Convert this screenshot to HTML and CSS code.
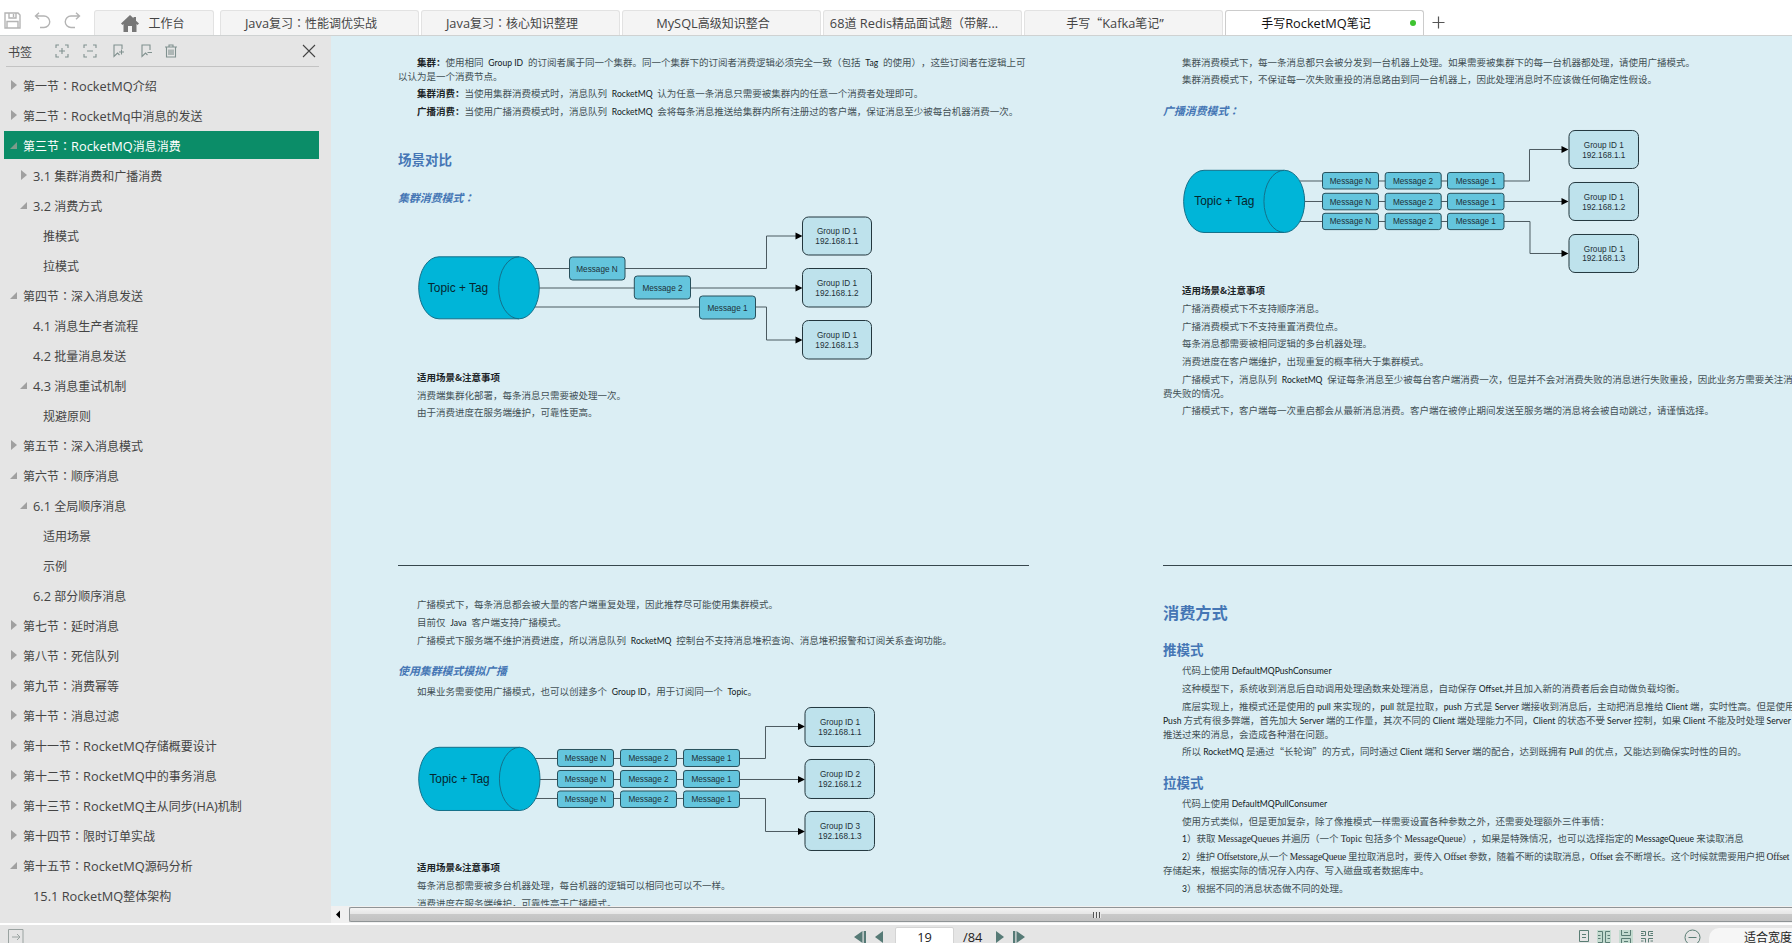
FILE: index.html
```html
<!DOCTYPE html>
<html lang="zh-CN">
<head>
    <meta charset="UTF-8">
    <meta name="viewport" content="width=device-width, initial-scale=1.0">
    <title>手写RocketMQ笔记</title>
    <link rel="stylesheet" href="styles.css">
</head>
<body>
    <header class="topbar">
        <div class="quick">
            <svg width="17" height="17" viewBox="0 0 17 17"><path d="M1 1h13l2 2v13H1zM5 1v5h7V1M9.500 2v3M3 16V9.500h11V16"/></svg>
            <svg width="17" height="17" viewBox="0 0 17 17"><path d="M1.500 4H10a5.500 5.500 0 0 1 0 11.500H6M5 .8L1.500 4 5 7.200"/></svg>
            <svg width="17" height="17" viewBox="0 0 17 17"><path d="M15.500 4H7a5.500 5.500 0 0 0 0 11.500h4M12 .8L15.500 4 12 7.200"/></svg>
        </div>
        <div class="tab home">
            <svg width="18" height="17" viewBox="0 0 18 17"><path d="M9 0L0 8.500 1.500 10 2.500 9V17H7V11h4v6h4.500V9l1 1L18 8.500 15 5.700V2h-2.500v1.300z"/></svg>
            工作台
        </div>
        <div class="tab"><span class="en">Java</span>复习<span class="co" lang="zh-TW">：</span>性能调优实战</div>
        <div class="tab"><span class="en">Java</span>复习<span class="co" lang="zh-TW">：</span>核心知识整理</div>
        <div class="tab"><span class="en">MySQL</span>高级知识整合</div>
        <div class="tab"><span class="en">68</span>道<span class="en"> Redis</span>精品面试题（带解<span class="en">...</span></div>
        <div class="tab">手写“<span class="en">Kafka</span>笔记<span class="en">”</span></div>
        <div class="tab active">手写<span class="en">RocketMQ</span>笔记<i class="dot"></i></div>
        <svg class="plus" width="13" height="13" viewBox="0 0 13 13"><path d="M6.500 .5v12M.5 6.500h12"/></svg>
    </header>

    <main class="main">
        <aside class="sidebar">
            <div class="side-head">
                <span class="side-title">书签</span>
                <svg width="14" height="14" viewBox="0 0 14 14"><path d="M1 4V1h3M10 1h3v3M13 10v3h-3M4 13H1v-3M7 4v6M4 7h6"/></svg>
                <svg width="14" height="14" viewBox="0 0 14 14"><path d="M1 4V1h3M10 1h3v3M13 10v3h-3M4 13H1v-3M4 7h6"/></svg>
                <svg width="14" height="14" viewBox="0 0 14 14"><path d="M11 5V1H3v11.500L6.500 9 8.500 11M8 8h5M10.500 5.500v5"/></svg>
                <svg width="14" height="14" viewBox="0 0 14 14"><path d="M11 6V1H3v11.500L6.500 9 8.500 11M8.500 8.500H13"/></svg>
                <svg class="trash" width="14" height="14" viewBox="0 0 14 14"><path d="M1 3h12M5 3V1h4v2M2.500 3.500v9.500h9V3.500M5 5.500v5.500M7 5.500v5.500M9 5.500v5.500"/></svg>
                <svg class="close" width="14" height="14" viewBox="0 0 14 14"><path d="M1 1l12 12M13 1L1 13"/></svg>
            </div>
            <ul class="tree">
                <li class="shut">第一节<span class="co" lang="zh-TW">：</span><span class="en">RocketMQ</span>介绍</li>
                <li class="shut">第二节<span class="co" lang="zh-TW">：</span><span class="en">RocketMq</span>中消息的发送</li>
                <li class="open selected">第三节<span class="co" lang="zh-TW">：</span><span class="en">RocketMQ</span>消息消费</li>
                <li class="shut lv1"><span class="en">3.1 </span>集群消费和广播消费</li>
                <li class="open lv1"><span class="en">3.2 </span>消费方式</li>
                <li class="lv2">推模式</li>
                <li class="lv2">拉模式</li>
                <li class="open">第四节<span class="co" lang="zh-TW">：</span>深入消息发送</li>
                <li class="lv1"><span class="en">4.1 </span>消息生产者流程</li>
                <li class="lv1"><span class="en">4.2 </span>批量消息发送</li>
                <li class="open lv1"><span class="en">4.3 </span>消息重试机制</li>
                <li class="lv2">规避原则</li>
                <li class="shut">第五节<span class="co" lang="zh-TW">：</span>深入消息模式</li>
                <li class="open">第六节<span class="co" lang="zh-TW">：</span>顺序消息</li>
                <li class="open lv1"><span class="en">6.1 </span>全局顺序消息</li>
                <li class="lv2">适用场景</li>
                <li class="lv2">示例</li>
                <li class="lv1"><span class="en">6.2 </span>部分顺序消息</li>
                <li class="shut">第七节<span class="co" lang="zh-TW">：</span>延时消息</li>
                <li class="shut">第八节<span class="co" lang="zh-TW">：</span>死信队列</li>
                <li class="shut">第九节<span class="co" lang="zh-TW">：</span>消费幂等</li>
                <li class="shut">第十节<span class="co" lang="zh-TW">：</span>消息过滤</li>
                <li class="shut">第十一节<span class="co" lang="zh-TW">：</span><span class="en">RocketMQ</span>存储概要设计</li>
                <li class="shut">第十二节<span class="co" lang="zh-TW">：</span><span class="en">RocketMQ</span>中的事务消息</li>
                <li class="shut">第十三节<span class="co" lang="zh-TW">：</span><span class="en">RocketMQ</span>主从同步<span class="en">(HA)</span>机制</li>
                <li class="shut">第十四节<span class="co" lang="zh-TW">：</span>限时订单实战</li>
                <li class="open">第十五节<span class="co" lang="zh-TW">：</span><span class="en">RocketMQ</span>源码分析</li>
                <li class="lv1"><span class="en">15.1 RocketMQ</span>整体架构</li>
            </ul>
        </aside>

        <section class="viewer">
            <div class="pages">
                <div class="column">
                    <article class="sheet wide">
                        <p><b>集群：</b>使用相同 <span class="la">Group ID</span> 的订阅者属于同一个集群。同一个集群下的订阅者消费逻辑必须完全一致（包括 <span class="la">Tag</span> 的使用），这些订阅者在逻辑上可<br>以认为是一个消费节点。</p>
                        <p><b>集群消费：</b>当使用集群消费模式时，消息队列 <span class="la">RocketMQ</span> 认为任意一条消息只需要被集群内的任意一个消费者处理即可。</p>
                        <p><b>广播消费：</b>当使用广播消费模式时，消息队列 <span class="la">RocketMQ</span> 会将每条消息推送给集群内所有注册过的客户端，保证消息至少被每台机器消费一次。</p>
                        <h2 class="far">场景对比</h2>
                        <h3 class="low">集群消费模式<span class="co" lang="zh-TW">：</span></h3>
                        <svg class="diagram" width="632" height="164.500" viewBox="398 205.500 632 164.500">
                            <path class="wire" d="M535 269H766.500V236.500H797M539 288.500H797M535 307.500H766.500V340.500H797"/>
                            <path class="head" d="M795.500 233l7 3.500-7 3.500zM795.500 285l7 3.500-7 3.500zM795.500 337l7 3.500-7 3.500z"/>
                            <path class="tank" d="M439 257.300H519a20.300 31 0 0 1 0 62H439a20.300 31 0 0 1 0-62zM519 319.300a20.300 31 0 0 1 0-62"/>
                            <text class="topic" x="458" y="292.500">Topic + Tag</text>
                            <g class="msg">
                                <rect x="569.500" y="257.500" width="55.500" height="23" rx="3"/><text x="597" y="272">Message N</text>
                                <rect x="634.300" y="276.500" width="56.200" height="23" rx="3"/><text x="662.500" y="291">Message 2</text>
                                <rect x="699.500" y="296.500" width="56" height="23" rx="3"/><text x="727.500" y="311">Message 1</text>
                            </g>
                            <g class="group">
                                <rect x="802.500" y="217.500" width="69" height="38" rx="6"/><text x="837" y="234.800">Group ID 1</text><text x="837" y="244.600">192.168.1.1</text>
                                <rect x="802.500" y="269" width="69" height="38.500" rx="6"/><text x="837" y="286.500">Group ID 1</text><text x="837" y="296.300">192.168.1.2</text>
                                <rect x="802.500" y="321" width="69" height="38.500" rx="6"/><text x="837" y="338.500">Group ID 1</text><text x="837" y="348.300">192.168.1.3</text>
                            </g>
                        </svg>
                        <p><b>适用场景&amp;注意事项</b></p>
                        <p>消费端集群化部署，每条消息只需要被处理一次。</p>
                        <p>由于消费进度在服务端维护，可靠性更高。</p>
                    </article>

                    <article class="sheet next wide">
                        <p>广播模式下，每条消息都会被大量的客户端重复处理，因此推荐尽可能使用集群模式。</p>
                        <p>目前仅 <span class="la">Java</span> 客户端支持广播模式。</p>
                        <p>广播模式下服务端不维护消费进度，所以消息队列 <span class="la">RocketMQ</span> 控制台不支持消息堆积查询、消息堆积报警和订阅关系查询功能。</p>
                        <h3 class="gap">使用集群模式模拟广播</h3>
                        <p>如果业务需要使用广播模式，也可以创建多个 <span class="la">Group ID</span>，用于订阅同一个 <span class="la">Topic</span>。</p>
                        <svg class="diagram" width="632" height="158.300" viewBox="398 702 632 158.300">
                            <path class="wire" d="M535 758.500H765.500V726.500H800M540 779.500H800M535 798.500H765.500V831.500H800"/>
                            <path class="head" d="M798 723l7 3.500-7 3.500zM798 776l7 3.500-7 3.500zM798 828l7 3.500-7 3.500z"/>
                            <path class="tank" d="M439 747.300H519.700a20.300 31.600 0 0 1 0 63.200H439a20.300 31.600 0 0 1 0-63.200zM519.700 810.500a20.300 31.600 0 0 1 0-63.200"/>
                            <text class="topic" x="459.500" y="783">Topic + Tag</text>
                            <g class="msg">
                                <rect x="557.500" y="749.500" width="56" height="17" rx="2.500"/><text x="585.500" y="761.300">Message N</text>
                                <rect x="620.500" y="749.500" width="56" height="17" rx="2.500"/><text x="648.500" y="761.300">Message 2</text>
                                <rect x="683.500" y="749.500" width="56" height="17" rx="2.500"/><text x="711.500" y="761.300">Message 1</text>
                                <rect x="557.500" y="770.500" width="56" height="17" rx="2.500"/><text x="585.500" y="782.300">Message N</text>
                                <rect x="620.500" y="770.500" width="56" height="17" rx="2.500"/><text x="648.500" y="782.300">Message 2</text>
                                <rect x="683.500" y="770.500" width="56" height="17" rx="2.500"/><text x="711.500" y="782.300">Message 1</text>
                                <rect x="557.500" y="791" width="56" height="16.500" rx="2.500"/><text x="585.500" y="802.300">Message N</text>
                                <rect x="620.500" y="791" width="56" height="16.500" rx="2.500"/><text x="648.500" y="802.300">Message 2</text>
                                <rect x="683.500" y="791" width="56" height="16.500" rx="2.500"/><text x="711.500" y="802.300">Message 1</text>
                            </g>
                            <g class="group">
                                <rect x="805" y="707.500" width="69.500" height="39" rx="6"/><text x="840" y="725">Group ID 1</text><text x="840" y="734.800">192.168.1.1</text>
                                <rect x="805" y="759.500" width="69.500" height="39" rx="6"/><text x="840" y="777">Group ID 2</text><text x="840" y="787">192.168.1.2</text>
                                <rect x="805" y="811.500" width="69.500" height="39" rx="6"/><text x="840" y="829">Group ID 3</text><text x="840" y="839">192.168.1.3</text>
                            </g>
                        </svg>
                        <p><b>适用场景&amp;注意事项</b></p>
                        <p>每条消息都需要被多台机器处理，每台机器的逻辑可以相同也可以不一样。</p>
                        <p>消费进度在服务端维护，可靠性高于广播模式。</p>
                    </article>
                </div>

                <div class="column">
                    <article class="sheet wide">
                        <p>集群消费模式下，每一条消息都只会被分发到一台机器上处理。如果需要被集群下的每一台机器都处理，请使用广播模式。</p>
                        <p>集群消费模式下，不保证每一次失败重投的消息路由到同一台机器上，因此处理消息时不应该做任何确定性假设。</p>
                        <h3 class="mid">广播消费模式<span class="co" lang="zh-TW">：</span></h3>
                        <svg class="diagram" width="632" height="164.300" viewBox="1163 119 632 164.300">
                            <path class="wire" d="M1300 181H1529.500V149.500H1564M1304 201.500H1564M1300 221.500H1530V253.500H1564"/>
                            <path class="head" d="M1561.500 146l7 3.500-7 3.500zM1561.500 198l7 3.500-7 3.500zM1561.500 250l7 3.500-7 3.500z"/>
                            <path class="tank" d="M1204 170.300H1284.300a20.300 31 0 0 1 0 62.200H1204a20.300 31 0 0 1 0-62.200zM1284.300 232.500a20.300 31 0 0 1 0-62.200"/>
                            <text class="topic" x="1224.300" y="205.500">Topic + Tag</text>
                            <g class="msg">
                                <rect x="1322.500" y="172.500" width="56" height="16.500" rx="2.500"/><text x="1350.500" y="184">Message N</text>
                                <rect x="1385.200" y="172.500" width="56" height="16.500" rx="2.500"/><text x="1413" y="184">Message 2</text>
                                <rect x="1447.500" y="172.500" width="56.500" height="16.500" rx="2.500"/><text x="1475.800" y="184">Message 1</text>
                                <rect x="1322.500" y="193.300" width="56" height="16.500" rx="2.500"/><text x="1350.500" y="205">Message N</text>
                                <rect x="1385.200" y="193.300" width="56" height="16.500" rx="2.500"/><text x="1413" y="205">Message 2</text>
                                <rect x="1447.500" y="193.300" width="56.500" height="16.500" rx="2.500"/><text x="1475.800" y="205">Message 1</text>
                                <rect x="1322.500" y="213.300" width="56" height="16.300" rx="2.500"/><text x="1350.500" y="224.500">Message N</text>
                                <rect x="1385.200" y="213.300" width="56" height="16.300" rx="2.500"/><text x="1413" y="224.500">Message 2</text>
                                <rect x="1447.500" y="213.300" width="56.500" height="16.300" rx="2.500"/><text x="1475.800" y="224.500">Message 1</text>
                            </g>
                            <g class="group">
                                <rect x="1569" y="130.500" width="69.500" height="38" rx="6"/><text x="1603.800" y="148">Group ID 1</text><text x="1603.800" y="157.800">192.168.1.1</text>
                                <rect x="1569" y="182.500" width="69.500" height="38" rx="6"/><text x="1603.800" y="199.800">Group ID 1</text><text x="1603.800" y="209.600">192.168.1.2</text>
                                <rect x="1569" y="234.500" width="69.500" height="38" rx="6"/><text x="1603.800" y="251.700">Group ID 1</text><text x="1603.800" y="261.500">192.168.1.3</text>
                            </g>
                        </svg>
                        <p><b>适用场景&amp;注意事项</b></p>
                        <p>广播消费模式下不支持顺序消息。</p>
                        <p>广播消费模式下不支持重置消费位点。</p>
                        <p>每条消息都需要被相同逻辑的多台机器处理。</p>
                        <p>消费进度在客户端维护，出现重复的概率稍大于集群模式。</p>
                        <p>广播模式下，消息队列 <span class="la">RocketMQ</span> 保证每条消息至少被每台客户端消费一次，但是并不会对消费失败的消息进行失败重投，因此业务方需要关注消<br>费失败的情况。</p>
                        <p>广播模式下，客户端每一次重启都会从最新消息消费。客户端在被停止期间发送至服务端的消息将会被自动跳过，请谨慎选择。</p>
                    </article>

                    <article class="sheet next">
                        <h1>消费方式</h1>
                        <h2 class="sub">推模式</h2>
                        <p>代码上使用 <span class="la">DefaultMQPushConsumer</span></p>
                        <p>这种模型下，系统收到消息后自动调用处理函数来处理消息，自动保存 <span class="la">Offset,</span>并且加入新的消费者后会自动做负载均衡。</p>
                        <p>底层实现上，推模式还是使用的 <span class="la">pull</span> 来实现的，<span class="la">pull</span> 就是拉取，<span class="la">push</span> 方式是 <span class="la">Server</span> 端接收到消息后，主动把消息推给 <span class="la">Client</span> 端，实时性高。但是使用<br><span class="la">Push</span> 方式有很多弊端，首先加大 <span class="la">Server</span> 端的工作量，其次不同的 <span class="la">Client</span> 端处理能力不同，<span class="la">Client</span> 的状态不受 <span class="la">Server</span> 控制，如果 <span class="la">Client</span> 不能及时处理 <span class="la">Server</span><br>推送过来的消息，会造成各种潜在问题。</p>
                        <p>所以 <span class="la">RocketMQ</span> 是通过“长轮询”的方式，同时通过 <span class="la">Client</span> 端和 <span class="la">Server</span> 端的配合，达到既拥有 <span class="la">Pull</span> 的优点，又能达到确保实时性的目的。</p>
                        <h2 class="sub2">拉模式</h2>
                        <p>代码上使用 <span class="la">DefaultMQPullConsumer</span></p>
                        <p>使用方式类似，但是更加复杂，除了像推模式一样需要设置各种参数之外，还需要处理额外三件事情：</p>
                        <p><span class="la">1</span>）获取 <span class="tm">MessageQueues</span> 并遍历（一个 <span class="tm">Topic</span> 包括多个 <span class="tm">MessageQueue</span>），如果是特殊情况，也可以选择指定的 <span class="la">MessageQueue</span> 来读取消息</p>
                        <p><span class="tight"><span class="la">2</span>）维护 <span class="tm">Offsetstore,</span>从一个 <span class="tm">MessageQueue</span> 里拉取消息时，要传入 <span class="tm">Offset</span> 参数，随着不断的读取消息，<span class="tm">Offset</span> 会不断增长。这个时候就需要用户把 <span class="tm">Offset</span></span><br>存储起来，根据实际的情况存入内存、写入磁盘或者数据库中。</p>
                        <p><span class="la">3</span>）根据不同的消息状态做不同的处理。</p>
                    </article>
                </div>
            </div>
            <div class="hscroll">
                <svg width="18" height="17" viewBox="0 0 18 17"><path d="M9 4.500v8L5 8.500z"/></svg>
                <div class="thumb"><span class="grip"></span></div>
            </div>
        </section>
    </main>

    <footer class="statusbar">
        <svg class="panel" width="16" height="16" viewBox="0 0 16 16"><path d="M.5 .5h14.500v15H.5zM4 8h8M9 5l3 3-3 3"/></svg>
        <div class="pager">
            <svg width="12" height="12" viewBox="0 0 12 12"><path d="M8.500 0v12L0 6zM12 0v12H9.700V0z"/></svg>
            <svg width="8" height="12" viewBox="0 0 8 12"><path d="M8 0v12L0 6z"/></svg>
            <span class="page-no">19</span>
            <span class="total">/84</span>
            <svg width="8" height="12" viewBox="0 0 8 12"><path d="M0 0v12l8-6z"/></svg>
            <svg width="12" height="12" viewBox="0 0 12 12"><path d="M3.500 0v12L12 6zM0 0v12h2.300V0z"/></svg>
        </div>
        <div class="modes">
            <svg width="10" height="12" viewBox="0 0 10 12"><path d="M.5 .5h9v11h-9zM3 4.500h4M3 7.500h4"/></svg>
            <svg class="on" width="14" height="14" viewBox="0 0 14 14"><path d="M1 1.500h4.500v11H1M13 1.500H8.500v11H13M1 5.500h2.500M1 8.500h2.500M13 5.500h-2.500M13 8.500h-2.500"/></svg>
            <svg class="on" width="14" height="14" viewBox="0 0 14 14"><path d="M2.500 0v5.500h9V0M2.500 14V8.500h9V14M5 2.500h4M5 11.500h4"/></svg>
            <svg width="12" height="14" viewBox="0 0 12 14"><path d="M0 1.500h4.500v4H0M12 1.500H7.500v4H12M0 8.500h4.500v4M12 8.500H7.500v4M0 3.500h2.500M12 3.500H9.500M0 11h2.500M12 11H9.500"/></svg>
        </div>
        <svg class="zoom-out" width="17" height="17" viewBox="0 0 17 17"><circle cx="8.500" cy="8.500" r="7.500"/><path d="M4.500 8.500h8"/></svg>
        <div class="zoom-level">适合宽度</div>
    </footer>
</body>
</html>
```
FILE: styles.css
```css
* {
    box-sizing: border-box;
}

body {
    margin: 0;
    height: 943px;
    overflow: hidden;
    display: flex;
    flex-direction: column;
    background-color: #fff;
    font-family: "Noto Sans CJK SC", sans-serif;
    font-size: 12px;
    color: #444;
    text-spacing-trim: space-all;
}

svg {
    display: block;
    flex: none;
}

.en {
    font-family: "Open Sans", sans-serif;
    font-size: 12.8px;
    line-height: 0;
    white-space: pre;
}

/* centred full-width colon */
.co {
    font-family: "Noto Sans CJK TC", sans-serif;
    line-height: 0;
}

/* Tabs */
.topbar {
    flex: none;
    height: 36px;
    display: flex;
    align-items: flex-end;
    border-bottom: 1px solid #cfd2d2;
}

.quick {
    width: 94px;
    height: 26px;
    padding-left: 4px;
    display: flex;
    align-items: center;
    gap: 13px;
    padding-bottom: 3px;
}

.quick svg {
    fill: none;
    stroke: #b4b4b4;
    stroke-width: 1.4;
}

.tab {
    position: relative;
    width: 199px;
    height: 25px;
    margin-right: 2px;
    padding-right: 17px;
    display: flex;
    align-items: center;
    justify-content: center;
    line-height: 18px;
    white-space: pre;
    background-color: #f4f4f4;
    border: 1px solid #e2e2e2;
    border-bottom: 0;
    border-radius: 3px 3px 0 0;
}

.tab.home {
    width: 120px;
    margin-right: 6px;
    padding: 0 2px 0 0;
    gap: 9px;
    white-space: normal;
}

.home svg {
    fill: #777;
}

.tab.active {
    background-color: #fff;
    border-color: #ccc;
    color: #111;
}

.dot {
    position: absolute;
    right: 7px;
    top: 9px;
    width: 6px;
    height: 6px;
    border-radius: 50%;
    background-color: #3dc32f;
}

.plus {
    margin: 0 0 6px 6px;
    stroke: #555;
    stroke-width: 1.2;
}

.main {
    flex: none;
    height: 887px;
    display: flex;
}

/* Bookmarks */
.sidebar {
    flex: none;
    width: 331px;
    background-color: #e5e5e5;
}

.side-head {
    height: 31px;
    margin: 0 12px 0 6px;
    padding-left: 2px;
    display: flex;
    align-items: center;
    gap: 14px;
    border-bottom: 1px solid #c3c3c3;
}

.side-title {
    width: 33px;
}

.side-head svg {
    fill: none;
    stroke: #80918f;
    stroke-width: 1.1;
}

.side-head .trash {
    margin-left: -3px;
}

.side-head .close {
    margin-left: auto;
    margin-right: 3px;
    stroke: #444;
}

.tree {
    list-style: none;
    margin: 4px 12px 0 4px;
    padding: 0;
}

.tree li {
    position: relative;
    height: 28px;
    line-height: 29px;
    margin-bottom: 2px;
    padding-left: 19px;
    white-space: nowrap;
}

.tree .lv1 {
    padding-left: 29px;
}

.tree .lv2 {
    padding-left: 39px;
}

.tree .shut::before,
.tree .open::before {
    content: "";
    position: absolute;
    left: 7px;
    top: 9px;
    border: 5px solid transparent;
    border-left: 6px solid #a0a0a0;
    border-right: 0;
}

.tree .open::before {
    left: 6px;
    top: 11px;
    border: 0;
    border-left: 7px solid transparent;
    border-bottom: 7px solid #a0a0a0;
}

.tree .shut.lv1::before {
    left: 17px;
}

.tree .open.lv1::before {
    left: 16px;
}

.tree .selected {
    background-color: #0b8d68;
    color: #fff;
}

.tree .selected::before {
    border-bottom-color: #7d9b8b;
}

/* Document */
.viewer {
    flex: 1;
    min-width: 0;
    display: flex;
    flex-direction: column;
    background-color: #dbeef4;
}

.pages {
    height: 870px;
    overflow: hidden;
    display: flex;
    gap: 134px;
    padding-left: 67px;
}

.column {
    flex: none;
    width: 631px;
}

.sheet {
    height: 530px;
    padding-top: 18.8px;
    display: flex;
    flex-direction: column;
    border-bottom: 1px solid #37474d;
    font-size: 9.5px;
    line-height: 14px;
    color: #435156;
}

.sheet.next {
    padding-top: 31.3px;
    border: 0;
}

.sheet p {
    margin: 0 0 3.7px;
    text-indent: 19px;
    white-space: nowrap;
}

.sheet.wide p {
    word-spacing: 2.7px;
}

.sheet b {
    color: #1c2427;
}

.la {
    font-family: Lato, sans-serif;
    font-size: 8.6px;
    line-height: 0;
    color: #10191c;
    word-spacing: 0;
}

.tm {
    font-family: "Liberation Serif", serif;
    line-height: 0;
    color: #1c2427;
}

.tight {
    letter-spacing: -0.14px;
}

.sheet h1,
.sheet h2,
.sheet h3 {
    flex: none;
    margin: 0;
    color: #4576b5;
}

.sheet h1 {
    margin-top: 2.5px;
    font-size: 16.2px;
    line-height: 24px;
}

.sheet h2 {
    font-size: 13.5px;
    line-height: 20px;
}

.sheet h3 {
    font-size: 10.9px;
    line-height: 16px;
    font-style: italic;
}

.sheet .far {
    margin-top: 27.5px;
}

.sheet .low {
    margin-top: 20px;
}

.sheet .gap {
    margin: 12px 0 6px;
}

.sheet .mid {
    margin-top: 12.1px;
    margin-bottom: 0.7px;
}

.sheet .sub {
    margin: 15.4px 0 4.1px;
}

.sheet .sub2 {
    margin: 10.2px 0 3.6px;
}

/* Diagrams */
.diagram {
    font-family: "Liberation Sans", Arial, sans-serif;
    font-size: 8.2px;
    text-anchor: middle;
}

.diagram text {
    fill: #1d3037;
}

.diagram .topic {
    font-size: 11.9px;
    fill: #06262e;
}

.wire {
    fill: none;
    stroke: #4b5a60;
}

.head {
    fill: #000;
}

.tank {
    fill: #00b5d8;
    stroke: #14708a;
}

.msg rect {
    fill: #64c5dd;
    stroke: #28505c;
}

.group rect {
    fill: #bee2ec;
    stroke: #23373e;
}

/* Scrollbar */
.hscroll {
    height: 17px;
    display: flex;
    background-color: #f0f0f0;
}

.thumb {
    flex: 1;
    height: 15px;
    margin-top: 1px;
    display: flex;
    align-items: center;
    border: 1px solid #8f9496;
    border-right: 0;
    border-radius: 2px 0 0 2px;
    background: linear-gradient(#f3f3f3 0, #e6e6e6 45%, #c9c9c9 50%, #c2c2c2 100%);
}

.grip {
    width: 8px;
    height: 6px;
    margin-left: 743px;
    background: repeating-linear-gradient(90deg, #555 0, #555 1px, #eee 1px, #ddd 3px);
}

/* Status bar */
.statusbar {
    flex: none;
    height: 18px;
    margin-top: 2px;
    display: flex;
    align-items: flex-start;
    background-color: #e5e5e5;
    overflow: hidden;
}

.panel {
    margin: 4px 0 0 8px;
    fill: none;
    stroke: #9aa3a1;
}

.pager {
    margin-left: 830px;
    display: flex;
    align-items: flex-start;
    font-family: "Open Sans", sans-serif;
    color: #222;
}

.pager svg {
    margin-top: 6px;
    margin-right: 9px;
    fill: #567a76;
}

.page-no {
    width: 59px;
    height: 24px;
    margin: 2px 9px 0 3px;
    line-height: 18px;
    font-size: 12.8px;
    text-align: center;
    background-color: #fff;
    border: 1px solid #d4d4d4;
    border-radius: 2px;
}

.total {
    width: 33px;
    margin-top: 2px;
    line-height: 20px;
    font-size: 12.8px;
}

.modes {
    margin: 5px 0 0 auto;
    display: flex;
    align-items: flex-start;
    gap: 8px;
}

.modes svg,
.zoom-out {
    fill: none;
    stroke: #5a7d74;
}

.modes .on {
    background-color: #c4dbd0;
}

.zoom-out {
    margin: 4px 8px 0 31px;
}

.zoom-level {
    width: 83px;
    height: 26px;
    margin-top: 3px;
    padding-left: 35px;
    line-height: 17px;
    color: #222;
    white-space: nowrap;
    background-color: #f6f6f6;
    border-radius: 10px 0 0 10px;
}
```
